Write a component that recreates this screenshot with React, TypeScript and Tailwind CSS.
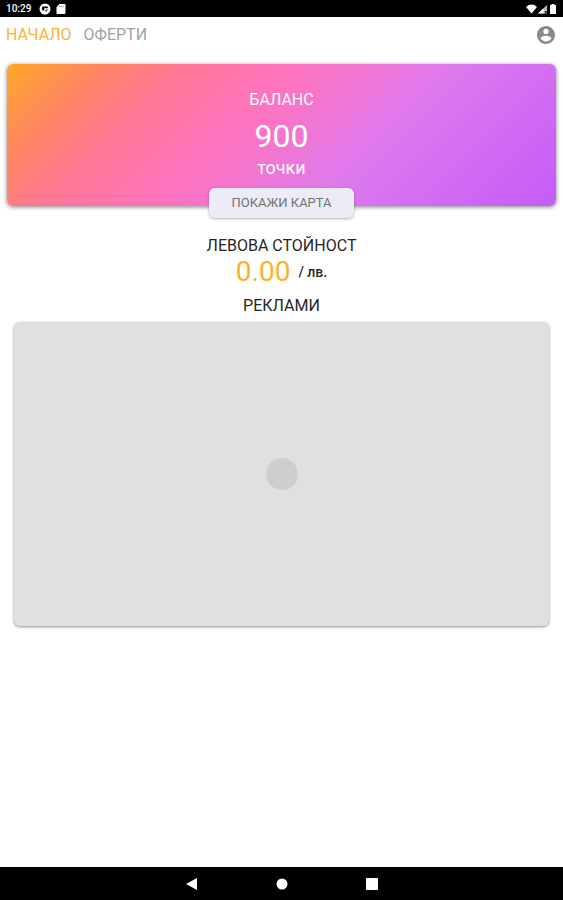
const TABS = [
  { label: 'НАЧАЛО', href: '#home', active: true },
  { label: 'ОФЕРТИ', href: '#offers', active: false },
]

export default function App() {
  return (
    <div className="flex min-h-screen flex-col bg-white font-['Roboto','Noto_Sans',sans-serif]">
      <StatusBar />
      <TopNav />
      <main className="flex-1">
        <BalanceCard points={900} />
        <section className="mt-7 text-center">
          <h2 className="text-base leading-6 text-neutral-800">ЛЕВОВА СТОЙНОСТ</h2>
          <p className="flex items-center justify-center gap-2 text-sm leading-7 text-neutral-800">
            <span className="text-[28px] leading-7 text-[#fbb12d]">0.00</span>
            <span className="font-medium">/ лв.</span>
          </p>
        </section>
        <section className="mt-2 px-3.5">
          <h2 className="text-center text-base leading-6 text-neutral-800">РЕКЛАМИ</h2>
          <AdPlaceholder />
        </section>
      </main>
      <SystemNav />
    </div>
  )
}

function StatusBar() {
  return (
    <div className="flex h-[17px] items-center justify-between bg-black px-1.5 text-white">
      <div className="flex items-center gap-2">
        <span className="text-[10px] leading-4 font-medium">10:29</span>
        <div className="flex items-center gap-1">
          <svg className="size-3" viewBox="0 0 12 12" aria-hidden="true">
            <circle cx="6" cy="6" r="5.5" fill="#fff" />
            <path d="M3.4 3.6h5.4v1.6H5.2v2.6H3.9A3.4 3.4 0 0 1 3.4 3.6Z" fill="#000" />
            <path d="M6.4 6.2h2.9L7.4 9.2l-1-.6Z" fill="#777" />
          </svg>
          <svg className="size-3" viewBox="0 0 12 12" aria-hidden="true">
            <path
              d="M4.5 1H9.5a1 1 0 0 1 1 1v8a1 1 0 0 1-1 1h-7a1 1 0 0 1-1-1V4Z"
              fill="#fff"
            />
            <path d="M4.8 2.8v1.4M6.5 2.8v1.4M8.2 2.8v1.4" stroke="#555" strokeWidth=".7" />
          </svg>
        </div>
      </div>
      <div className="flex items-center gap-px">
        <svg className="h-3 w-[11px]" viewBox="0 0 11 12" fill="#fff" aria-hidden="true">
          <path d="M0 4Q5.5-.8 11 4L5.5 10.5Z" />
        </svg>
        <svg className="h-3 w-2.5" viewBox="1 0 11 12" aria-hidden="true">
          <path d="M11 1.5V11H1Z" fill="#bbb" />
          <path d="M7 5.3V11H1Z" fill="#fff" />
          <path d="m8.5 8.2 2.5 2.6m0-2.6-2.5 2.6" stroke="#000" strokeWidth=".8" />
        </svg>
        <svg className="h-3 w-2" viewBox="0 0 8 12" fill="#fff" aria-hidden="true">
          <path d="M2.5 1h3v1H7v9H1V2h1.5Z" />
        </svg>
      </div>
    </div>
  )
}

function TopNav() {
  return (
    <header className="flex h-[35px] items-center justify-between pr-2 pl-1.5">
      <nav className="flex gap-3 text-base leading-6">
        {TABS.map((tab) => (
          <a
            key={tab.href}
            href={tab.href}
            className={tab.active ? 'text-[#fbb040]' : 'text-neutral-400'}
          >
            {tab.label}
          </a>
        ))}
      </nav>
      <button type="button" aria-label="Профил" className="text-[#8a8a8a]">
        <svg className="size-[18px]" viewBox="2 2 20 20" fill="currentColor" aria-hidden="true">
          <path d="M12 2C6.48 2 2 6.48 2 12s4.48 10 10 10 10-4.48 10-10S17.52 2 12 2Zm0 3c1.66 0 3 1.34 3 3s-1.34 3-3 3-3-1.34-3-3 1.34-3 3-3Zm0 14.2c-2.5 0-4.71-1.28-6-3.22.03-1.99 4-3.08 6-3.08 1.99 0 5.97 1.09 6 3.08-1.29 1.94-3.5 3.22-6 3.22Z" />
        </svg>
      </button>
    </header>
  )
}

function BalanceCard({ points }: { points: number }) {
  return (
    <section className="mx-[7px] mt-3 flex flex-col items-center rounded-md bg-[linear-gradient(135deg,#ffa726_0%,#ff8468_15%,#ff7895_26%,#ff74b8_39%,#fb74c2_45%,#df7aec_64%,#c45cf9_100%)] pt-6 text-white shadow-[0_1px_4px_rgba(0,0,0,0.5)]">
      <h2 className="text-base leading-6">БАЛАНС</h2>
      <p className="mt-1 text-[32px] leading-10">{points}</p>
      <p className="text-lg leading-6">точки</p>
      <button
        type="button"
        className="mt-2 -mb-3 h-[30px] rounded-md bg-[#ececf6] px-[22px] text-[13px] text-neutral-500 shadow-[0_1px_3px_rgba(0,0,0,0.3)]"
      >
        ПОКАЖИ КАРТА
      </button>
    </section>
  )
}

function AdPlaceholder() {
  return (
    <div className="mt-1 flex h-[304px] items-center justify-center rounded-md bg-[#e0e0e0] shadow-[0_1px_3px_rgba(0,0,0,0.45)]">
      <div className="size-8 rounded-full bg-[#cecece]" />
    </div>
  )
}

function SystemNav() {
  return (
    <div className="flex h-[33px] items-center justify-center gap-[78px] bg-black text-white">
      <button type="button" aria-label="Назад">
        <svg className="size-3" viewBox="0 0 12 12" fill="currentColor" aria-hidden="true">
          <path d="M11 0V12L0 6Z" />
        </svg>
      </button>
      <button type="button" aria-label="Начало">
        <svg className="size-3" viewBox="0 0 12 12" fill="currentColor" aria-hidden="true">
          <circle cx="6" cy="6" r="5.5" />
        </svg>
      </button>
      <button type="button" aria-label="Скорошни">
        <svg className="size-3" viewBox="0 0 12 12" fill="currentColor" aria-hidden="true">
          <rect width="12" height="12" rx="1" />
        </svg>
      </button>
    </div>
  )
}
